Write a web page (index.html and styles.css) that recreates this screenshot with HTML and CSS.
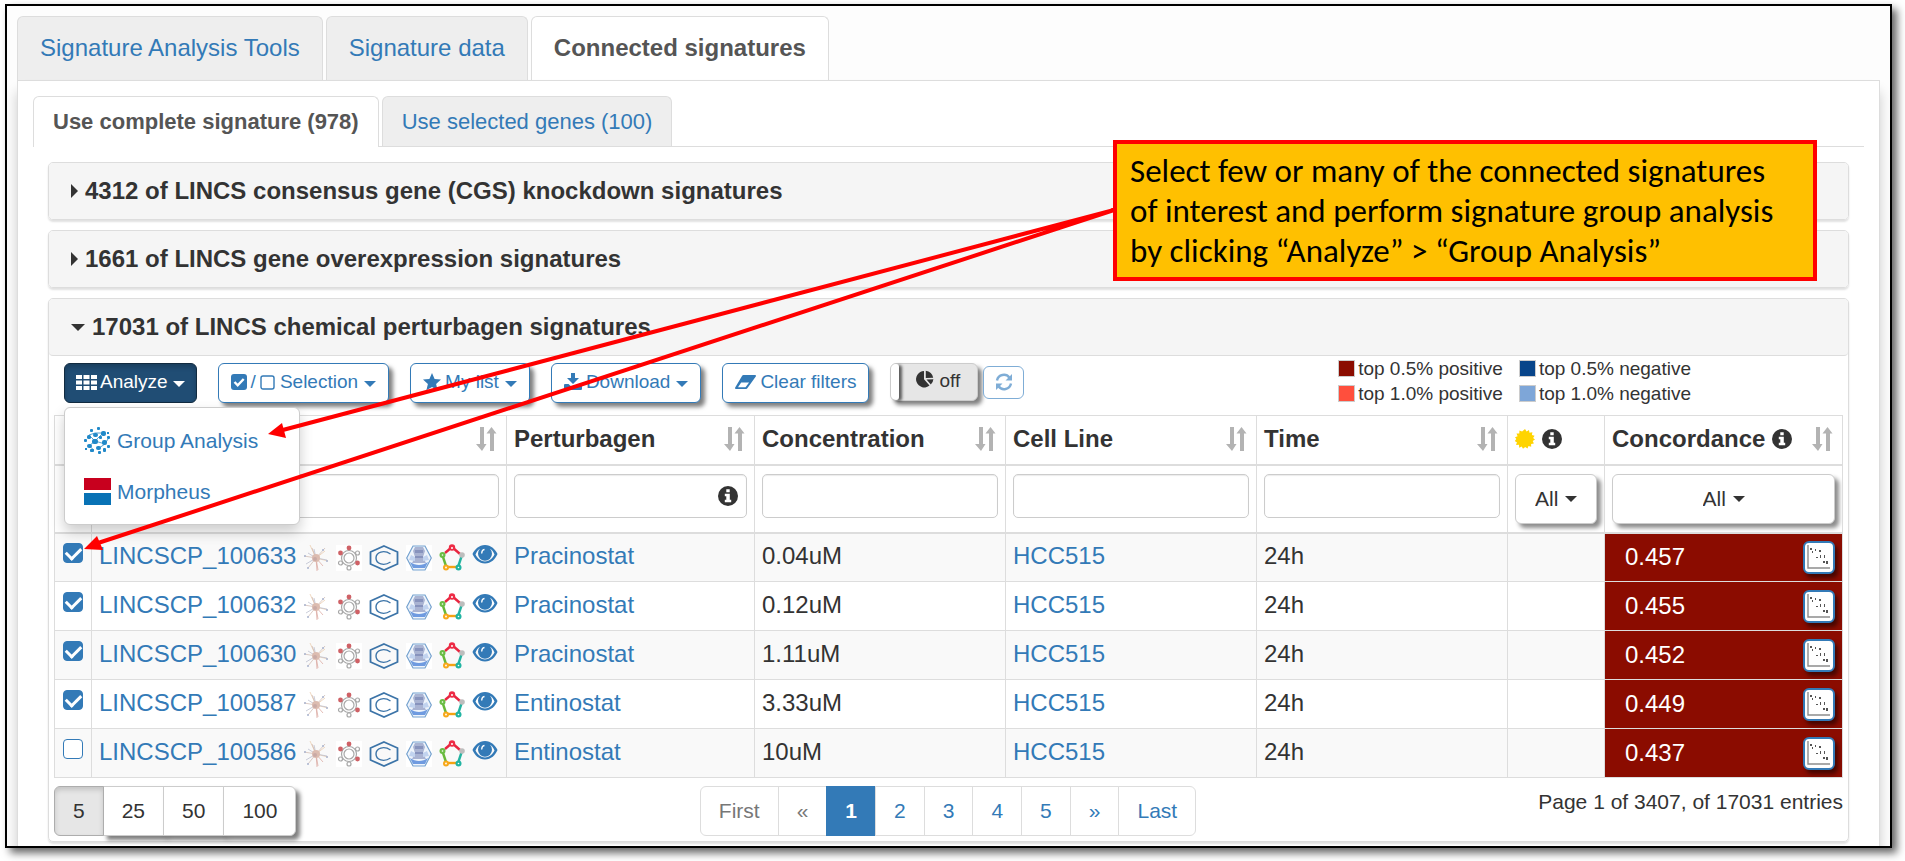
FILE: index.html
```html
<!DOCTYPE html>
<html lang="en">
<head>
  <meta charset="UTF-8">
  <meta name="viewport" content="width=device-width, initial-scale=1.0">
  <title>Connected signatures</title>
  <link rel="stylesheet" href="styles.css">
</head>
<body>
  <!-- icon set -->
  <svg class="defs" aria-hidden="true">
    <symbol id="i-th" viewBox="0 0 21 17"><path d="M0 1h6v4H0zM7.500 1h6v4h-6zM15 1h6v4h-6zM0 6.500h6v4H0zM7.500 6.500h6v4h-6zM15 6.500h6v4h-6zM0 12h6v4H0zM7.500 12h6v4h-6zM15 12h6v4h-6z" fill="currentColor"/></symbol>
    <symbol id="i-check" viewBox="0 0 16 16"><rect width="16" height="16" rx="3" fill="currentColor"/><path d="M3.500 8l3.200 3.300 6-6.300" fill="none" stroke="#fff" stroke-width="2.400"/></symbol>
    <symbol id="i-square" viewBox="0 0 16 16"><rect x="1" y="2" width="13" height="13" rx="2" fill="none" stroke="currentColor" stroke-width="1.400"/></symbol>
    <symbol id="i-star" viewBox="0 0 18 18"><path d="M9 0l2.600 6 6.400.6-4.900 4.300L14.600 17.300 9 14l-5.600 3.300 1.500-6.400L0 6.600 6.400 6z" fill="currentColor"/></symbol>
    <symbol id="i-download" viewBox="0 0 18 18"><path d="M7 0h4v5h4l-6 6-6-6h4z" fill="currentColor"/><path d="M1 11h3.500L9 15l4.500-4H17a1 1 0 0 1 1 1v4a1 1 0 0 1-1 1H1a1 1 0 0 1-1-1v-4a1 1 0 0 1 1-1z" fill="currentColor"/></symbol>
    <symbol id="i-eraser" viewBox="0 0 21 16"><path d="M8.500 1H20a1 1 0 0 1 .8 1.500L12.500 14a2 2 0 0 1-1.500 1H1a1 1 0 0 1-.8-1.500L7 2a2 2 0 0 1 1.500-1zM3 13.200h7.500l3.600-4.800H6.200z" fill="currentColor" fill-rule="evenodd"/></symbol>
    <symbol id="i-pie" viewBox="0 0 18 18"><path d="M8 1v8.300l5.500 6.200A8.200 8.200 0 1 1 8 1zM9.800.8a8 8 0 0 1 7.400 7L9.800 8zM10.500 9.600l6.900-.3a8 8 0 0 1-2.600 5.200z" fill="currentColor"/></symbol>
    <symbol id="i-refresh" viewBox="0 0 18 18"><path d="M2 7.500a7 7 0 0 1 12.500-2.800M16 10.500a7 7 0 0 1-12.500 2.800" fill="none" stroke="currentColor" stroke-width="2.400"/><path d="M17 1v6.500h-6.500zM1 17v-6.500h6.500z" fill="currentColor"/></symbol>
    <symbol id="i-info" viewBox="0 0 20 20"><circle cx="10" cy="10" r="10" fill="currentColor"/><path d="M8.300 3.200h3.400v3H8.300zM6.800 7.800h5v6h1.400v2.500H6.800v-2.500h1.500v-3.500H6.800z" fill="#fff"/></symbol>
    <symbol id="i-sort" viewBox="0 0 22 26"><path d="M5 1h4v17h2.500L7 25 1 18h4zM15 25h4V7.500h2.500L16.500 1 11.500 7.500H15z" fill="#b3b3b3"/></symbol>
    <symbol id="i-sun" viewBox="0 0 20 20"><path d="M10 0l1.600 2.400L14 .9l.5 2.800 2.900-.5-.5 2.900 2.700.7L18.100 9l1.900 1.500-2.300 1.400 1.200 2.700-2.800.3.1 2.900-2.700-.9-1 2.700-2.300-1.700L8 19.800l-1.300-2.400-2.500 1.300-.2-2.900-2.900.2.800-2.800-2.200-1 1.600-2.100L0 8.200l2.600-1L1.500 4.500l2.800-.1.100-2.900 2.700 1.100z" fill="#ffd400"/></symbol>
    <symbol id="i-group" viewBox="0 0 27 27"><g stroke="#2a8cc7" stroke-width=".8" fill="none"><path d="M5 8l6 6 8-8M11 14l-6 5M11 14l10 3M11 6l8 0M5 19l5 4M21 17l-6 4M5 8l6-2M24 12l-3 5"/></g><g fill="#2189c9"><rect x="8" y="12" width="6" height="5" rx="2"/><rect x="17" y="4" width="5" height="5" rx="2"/><rect x="9" y="6" width="5" height="4" rx="2"/><rect x="3" y="8" width="4" height="4" rx="1.500"/><rect x="3" y="17" width="5" height="4" rx="2"/><rect x="18" y="13" width="5" height="5" rx="2"/><rect x="12" y="19" width="5" height="4" rx="2"/><rect x="15" y="9" width="3" height="3" rx="1"/><rect x="23" y="9" width="3" height="3" rx="1"/><rect x="0" y="12" width="3" height="3" rx="1"/><rect x="6" y="2" width="3" height="3" rx="1"/><rect x="13" y="0" width="3" height="3" rx="1"/><rect x="23" y="18" width="3" height="3" rx="1"/><rect x="6" y="22" width="4" height="3" rx="1"/><rect x="14" y="24" width="3" height="3" rx="1"/><rect x="19" y="21" width="3" height="4" rx="1"/><rect x="1" y="21" width="2" height="2"/><rect x="23" y="5" width="2" height="2"/></g></symbol>
    <symbol id="i-morpheus" viewBox="0 0 27 27"><path d="M0 0h27v12H0z" fill="#c8001e"/><path d="M0 15h27v12H0z" fill="#0872b5"/></symbol>
    <symbol id="i-burst" viewBox="0 0 26 28"><g stroke-width=".7" fill="none"><path d="M13 14L7 1M13 14l9-7M13 14l12 3" stroke="#e9c9a8"/><path d="M13 14L1 12M13 14l-8 10M13 14l9-10M13 14L9 4" stroke="#cdb6ae"/><path d="M13 14l1 13M13 14l2 12M13 14l7 8" stroke="#d9a29a"/><path d="M13 14L3 20M13 14l11 2M13 14l-2-9M13 14l-8-5" stroke="#b5b8c8"/></g><circle cx="13" cy="14" r="4" fill="#dcbcb0"/><circle cx="12" cy="15" r="2" fill="#c9aaa6"/><g fill="#aab4cf"><circle cx="2" cy="12" r="1"/><circle cx="20" cy="6" r="1"/><circle cx="5" cy="24" r="1"/><circle cx="24" cy="17" r="1"/></g></symbol>
    <symbol id="i-ring" viewBox="0 0 26 26"><path d="M0 0h26v26H0z" fill="#fff"/><g fill="#fff" stroke="#a8a8a8" stroke-width="1.200"><circle cx="13" cy="13" r="7.500"/><circle cx="13" cy="13" r="5"/><circle cx="21.500" cy="8" r="2"/><circle cx="4.500" cy="18" r="2"/><circle cx="13" cy="23" r="2"/></g><g fill="#cf6166"><circle cx="13" cy="3" r="2.400"/><circle cx="4.500" cy="8" r="2.400"/><circle cx="21.500" cy="18" r="2.400"/></g></symbol>
    <symbol id="i-chex" viewBox="0 0 30 26"><g fill="none" stroke="#3c74a8"><path d="M15 1l13.500 6v12L15 25 1.500 19V7z" stroke-width="1.800"/><path d="M21.500 9C15 4.500 7 7 7 13s8 8.500 14.500 4" stroke-width="1.400"/></g></symbol>
    <symbol id="i-photo" viewBox="0 0 26 26"><path d="M0 0h26v26H0z" fill="#fff"/><path d="M7 1h12l6.300 12L19 25H7L.7 13z" fill="#eef4fb" stroke="#75a2cf" stroke-width="1.200"/><path d="M9 2h8l2 4-2 6 3 6H6l3-6-2-6z" fill="#a9b3d2"/><path d="M9 5h8v3H9zM9 11h8v2H9z" fill="#8793bd"/><path d="M4 17c6 4 12 4 18 0l-3 6H7z" fill="#6f9be0"/><path d="M5 10l4 2v4l-6-1zM21 10l-4 2v4l6-1z" fill="#c1d3ef"/></symbol>
    <symbol id="i-penta" viewBox="0 0 26 27"><g fill="none" stroke-width="2.400"><path d="M13 3L6 9" stroke="#e8253f"/><path d="M13 3l8 7" stroke="#e8253f"/><path d="M3 10l4 12" stroke="#67b83a"/><path d="M7 23h12" stroke="#f5a312"/><path d="M19 23l4-12" stroke="#23b3a0"/></g><circle cx="13" cy="3.500" r="3.200" fill="#ee2b45"/><circle cx="3.500" cy="11" r="3" fill="#6abd45"/><circle cx="23" cy="11" r="2.800" fill="#bdbdbd"/><circle cx="7" cy="23.500" r="3" fill="#f7a81b"/><circle cx="19.500" cy="23.500" r="3" fill="#21b4a2"/><g fill="#fff"><circle cx="13" cy="4" r="1"/><circle cx="3.500" cy="11" r=".8"/><circle cx="7" cy="23.500" r=".9"/><circle cx="19.500" cy="23.500" r=".8"/></g></symbol>
    <symbol id="i-eye" viewBox="0 0 26 22"><path d="M13 1C7 1 2.500 5.500.5 10c2 5 6.500 9.500 12.500 9.500S23.500 15 25.500 10C23.500 5.500 19 1 13 1zm0 16.500c-4 0-7.500-3-9.500-7C4.500 8 6 6 8 4.800a7 7 0 1 0 10 0c2 1.200 3.500 3.200 4.500 5.700-2 4-5.500 7-9.500 7z" fill="currentColor" fill-rule="evenodd"/><circle cx="13" cy="9.500" r="5.200" fill="currentColor"/><path d="M12.500 5.500c-2 .3-3 2-2.600 4" fill="none" stroke="#fff" stroke-width="1.400"/></symbol>
    <symbol id="i-plot" viewBox="0 0 26 28"><path d="M2 2v23h22" fill="none" stroke="#8d8d8d" stroke-width="1.400"/><path d="M4 5h2v2H4zM6 8h1v2H6zM9 6h1v2H9zM13 7h2v2h-2zM10 14h2v1h-2zM14 12h1v3h-1zM18 12h1v3h-1zM17 18h2v2h-2zM20 18h2v3h-2z" fill="#555"/></symbol>
  </svg>

  <div class="frame">
    <nav class="tabs">
      <a href="#tools">Signature Analysis Tools</a>
      <a href="#data">Signature data</a>
      <a href="#connected" class="active">Connected signatures</a>
    </nav>

    <main class="content">
      <nav class="tabs tabs-sm">
        <a href="#complete" class="active">Use complete signature (978)</a>
        <a href="#selected">Use selected genes (100)</a>
      </nav>

      <div class="panels">
        <section class="panel">
          <h4><i class="caret-right"></i>4312 of LINCS consensus gene (CGS) knockdown signatures</h4>
        </section>
        <section class="panel">
          <h4><i class="caret-right"></i>1661 of LINCS gene overexpression signatures</h4>
        </section>
        <section class="panel open">
          <h4><i class="caret"></i>17031 of LINCS chemical perturbagen signatures</h4>

          <div class="panel-body">
            <div class="toolbar">
              <div class="dropdown">
                <button type="button" class="btn btn-dark"><svg width="21" height="17"><use href="#i-th"/></svg>Analyze<i class="caret"></i></button>
                <div class="menu">
                  <a href="#group"><svg width="27" height="27"><use href="#i-group"/></svg>Group Analysis</a>
                  <a href="#morpheus"><svg width="27" height="27"><use href="#i-morpheus"/></svg>Morpheus</a>
                </div>
              </div>
              <button type="button" class="btn"><svg width="16" height="16"><use href="#i-check"/></svg>/<svg width="16" height="16"><use href="#i-square"/></svg>Selection<i class="caret"></i></button>
              <button type="button" class="btn"><svg width="18" height="18"><use href="#i-star"/></svg>My list<i class="caret"></i></button>
              <button type="button" class="btn"><svg width="18" height="18"><use href="#i-download"/></svg>Download<i class="caret"></i></button>
              <button type="button" class="btn"><svg width="21" height="16"><use href="#i-eraser"/></svg>Clear filters</button>
              <div class="switches">
                <label class="toggle"><input type="checkbox"><svg width="18" height="18"><use href="#i-pie"/></svg>off</label>
                <button type="button" class="btn-refresh" aria-label="Refresh"><svg width="18" height="18"><use href="#i-refresh"/></svg></button>
              </div>
              <ul class="legend">
                <li><i class="sw pos-05"></i>top 0.5% positive</li>
                <li><i class="sw neg-05"></i>top 0.5% negative</li>
                <li><i class="sw pos-10"></i>top 1.0% positive</li>
                <li><i class="sw neg-10"></i>top 1.0% negative</li>
              </ul>
            </div>

            <table>
              <colgroup>
                <col class="c-check"><col class="c-id"><col class="c-name"><col><col><col><col class="c-sun"><col class="c-conc">
              </colgroup>
              <thead>
                <tr>
                  <th></th>
                  <th><div class="th"><svg class="sort" width="22" height="26"><use href="#i-sort"/></svg></div></th>
                  <th><div class="th">Perturbagen<svg class="sort" width="22" height="26"><use href="#i-sort"/></svg></div></th>
                  <th><div class="th">Concentration<svg class="sort" width="22" height="26"><use href="#i-sort"/></svg></div></th>
                  <th><div class="th">Cell Line<svg class="sort" width="22" height="26"><use href="#i-sort"/></svg></div></th>
                  <th><div class="th">Time<svg class="sort" width="22" height="26"><use href="#i-sort"/></svg></div></th>
                  <th><div class="th"><svg width="20" height="20"><use href="#i-sun"/></svg><svg width="20" height="20"><use href="#i-info"/></svg></div></th>
                  <th><div class="th">Concordance<svg width="20" height="20"><use href="#i-info"/></svg><svg class="sort" width="22" height="26"><use href="#i-sort"/></svg></div></th>
                </tr>
                <tr class="filters">
                  <td></td>
                  <td><input type="text" class="field" aria-label="Signature"></td>
                  <td><div class="field field-info"><input type="text" aria-label="Perturbagen"><svg width="20" height="20"><use href="#i-info"/></svg></div></td>
                  <td><input type="text" class="field" aria-label="Concentration"></td>
                  <td><input type="text" class="field" aria-label="Cell Line"></td>
                  <td><input type="text" class="field" aria-label="Time"></td>
                  <td><label class="pick"><select aria-label="Active"><option>All</option></select><i class="caret"></i></label></td>
                  <td><label class="pick"><select aria-label="Concordance"><option>All</option></select><i class="caret"></i></label></td>
                </tr>
              </thead>
              <tbody>
                <tr>
                  <td><input type="checkbox" class="check" aria-label="LINCSCP_100633" checked></td>
                  <td><div class="sig"><a href="#LINCSCP_100633">LINCSCP_100633</a><svg width="26" height="28"><use href="#i-burst"/></svg><svg width="26" height="26"><use href="#i-ring"/></svg><svg width="30" height="26"><use href="#i-chex"/></svg><svg width="26" height="26"><use href="#i-photo"/></svg><svg width="26" height="27"><use href="#i-penta"/></svg><svg class="eye" width="26" height="22"><use href="#i-eye"/></svg></div></td>
                  <td><a href="#Pracinostat">Pracinostat</a></td>
                  <td>0.04uM</td>
                  <td><a href="#HCC515">HCC515</a></td>
                  <td>24h</td>
                  <td></td>
                  <td class="score"><div>0.457<button type="button" aria-label="Plot"><svg width="26" height="28"><use href="#i-plot"/></svg></button></div></td>
                </tr>
                <tr>
                  <td><input type="checkbox" class="check" aria-label="LINCSCP_100632" checked></td>
                  <td><div class="sig"><a href="#LINCSCP_100632">LINCSCP_100632</a><svg width="26" height="28"><use href="#i-burst"/></svg><svg width="26" height="26"><use href="#i-ring"/></svg><svg width="30" height="26"><use href="#i-chex"/></svg><svg width="26" height="26"><use href="#i-photo"/></svg><svg width="26" height="27"><use href="#i-penta"/></svg><svg class="eye" width="26" height="22"><use href="#i-eye"/></svg></div></td>
                  <td><a href="#Pracinostat">Pracinostat</a></td>
                  <td>0.12uM</td>
                  <td><a href="#HCC515">HCC515</a></td>
                  <td>24h</td>
                  <td></td>
                  <td class="score"><div>0.455<button type="button" aria-label="Plot"><svg width="26" height="28"><use href="#i-plot"/></svg></button></div></td>
                </tr>
                <tr>
                  <td><input type="checkbox" class="check" aria-label="LINCSCP_100630" checked></td>
                  <td><div class="sig"><a href="#LINCSCP_100630">LINCSCP_100630</a><svg width="26" height="28"><use href="#i-burst"/></svg><svg width="26" height="26"><use href="#i-ring"/></svg><svg width="30" height="26"><use href="#i-chex"/></svg><svg width="26" height="26"><use href="#i-photo"/></svg><svg width="26" height="27"><use href="#i-penta"/></svg><svg class="eye" width="26" height="22"><use href="#i-eye"/></svg></div></td>
                  <td><a href="#Pracinostat">Pracinostat</a></td>
                  <td>1.11uM</td>
                  <td><a href="#HCC515">HCC515</a></td>
                  <td>24h</td>
                  <td></td>
                  <td class="score"><div>0.452<button type="button" aria-label="Plot"><svg width="26" height="28"><use href="#i-plot"/></svg></button></div></td>
                </tr>
                <tr>
                  <td><input type="checkbox" class="check" aria-label="LINCSCP_100587" checked></td>
                  <td><div class="sig"><a href="#LINCSCP_100587">LINCSCP_100587</a><svg width="26" height="28"><use href="#i-burst"/></svg><svg width="26" height="26"><use href="#i-ring"/></svg><svg width="30" height="26"><use href="#i-chex"/></svg><svg width="26" height="26"><use href="#i-photo"/></svg><svg width="26" height="27"><use href="#i-penta"/></svg><svg class="eye" width="26" height="22"><use href="#i-eye"/></svg></div></td>
                  <td><a href="#Entinostat">Entinostat</a></td>
                  <td>3.33uM</td>
                  <td><a href="#HCC515">HCC515</a></td>
                  <td>24h</td>
                  <td></td>
                  <td class="score"><div>0.449<button type="button" aria-label="Plot"><svg width="26" height="28"><use href="#i-plot"/></svg></button></div></td>
                </tr>
                <tr>
                  <td><input type="checkbox" class="check" aria-label="LINCSCP_100586"></td>
                  <td><div class="sig"><a href="#LINCSCP_100586">LINCSCP_100586</a><svg width="26" height="28"><use href="#i-burst"/></svg><svg width="26" height="26"><use href="#i-ring"/></svg><svg width="30" height="26"><use href="#i-chex"/></svg><svg width="26" height="26"><use href="#i-photo"/></svg><svg width="26" height="27"><use href="#i-penta"/></svg><svg class="eye" width="26" height="22"><use href="#i-eye"/></svg></div></td>
                  <td><a href="#Entinostat">Entinostat</a></td>
                  <td>10uM</td>
                  <td><a href="#HCC515">HCC515</a></td>
                  <td>24h</td>
                  <td></td>
                  <td class="score"><div>0.437<button type="button" aria-label="Plot"><svg width="26" height="28"><use href="#i-plot"/></svg></button></div></td>
                </tr>
              </tbody>
            </table>

            <div class="footer">
              <div class="sizes">
                <button type="button" class="active">5</button>
                <button type="button">25</button>
                <button type="button">50</button>
                <button type="button">100</button>
              </div>
              <nav class="pages">
                <a href="#first" class="off">First</a>
                <a href="#prev" class="off">«</a>
                <a href="#p1" class="active">1</a>
                <a href="#p2">2</a>
                <a href="#p3">3</a>
                <a href="#p4">4</a>
                <a href="#p5">5</a>
                <a href="#next">»</a>
                <a href="#last">Last</a>
              </nav>
              <p>Page 1 of 3407, of 17031 entries</p>
            </div>
          </div>
        </section>
      </div>
    </main>

    <!-- help note with arrows to the menu and the first tick box -->
    <svg class="arrows" aria-hidden="true">
      <g stroke="#f00" stroke-width="4"><path d="M1107 204L272 425M1107 204L88 538"/></g>
      <g fill="#f00"><path d="M261 428l14-11 4 15zM77 543l13-13 6 14z"/></g>
    </svg>
    <div class="callout">Select few or many of the connected signatures<br>of interest and perform signature group analysis<br>by clicking “Analyze” &gt; “Group Analysis”</div>
  </div>
</body>
</html>
```

FILE: styles.css
```css
* {
  box-sizing: border-box;
}

body {
  margin: 0;
  background: #fff;
  font-family: "Liberation Sans", Arial, sans-serif;
  font-size: 24px;
  line-height: 32px;
  color: #333;
}

a {
  color: #337ab7;
  text-decoration: none;
}

button, input, select {
  font-family: inherit;
  color: inherit;
}

svg {
  display: block;
  flex: none;
}

.defs {
  position: absolute;
  width: 0;
  height: 0;
}

.frame {
  position: relative;
  margin: 4px 13px 13px 5px;
  padding: 10px 10px 0 10px;
  border: 2px solid #000;
  background: #fdfdfd;
  box-shadow: 5px 5px 8px rgba(0,0,0,0.6);
}

/* tabs */
.tabs {
  display: flex;
  gap: 3px;
}

.tabs a {
  padding: 15px 22px 16px;
  border: 1px solid #ddd;
  border-bottom: none;
  border-radius: 6px 6px 0 0;
  background: #eee;
}

.tabs a.active {
  position: relative;
  margin-bottom: -1px;
  background: #fff;
  color: #555;
  font-weight: bold;
}

.content {
  padding: 15px 15px 4px;
  border: 1px solid #ddd;
  border-bottom: none;
  background: #fff;
  box-shadow: 0 12px 12px rgba(0,0,0,0.2);
  clip-path: inset(-1px -10px 0 -10px);
}

.tabs-sm {
  border-bottom: 1px solid #ddd;
  font-size: 22px;
  line-height: 24px;
}

.tabs-sm a {
  padding: 13px 19px 12px;
}

/* panels */
.panels {
  display: flex;
  flex-direction: column;
  gap: 10px;
  padding: 15px 15px 0;
}

.panel {
  border: 1px solid #ddd;
  border-radius: 5px;
  box-shadow: 0 2px 2px rgba(0,0,0,0.12);
}

.panel h4 {
  display: flex;
  align-items: center;
  gap: 7px;
  margin: 0;
  padding: 12px 22px;
  border-radius: 4px;
  background: #f5f5f5;
  font-size: 24px;
}

.panel.open h4 {
  border-bottom: 1px solid #ddd;
}

.caret {
  flex: none;
  border: 6px solid transparent;
  border-top-color: currentColor;
  border-bottom: none;
}

h4 .caret {
  border-width: 7px;
  border-bottom: none;
}

.caret-right {
  border: 7px solid transparent;
  border-left-color: currentColor;
  border-right: none;
}

.panel-body {
  padding: 7px 5px 5px;
}

/* toolbar */
.toolbar {
  display: flex;
  align-items: flex-start;
  gap: 21px;
  padding: 0 10px;
  margin-bottom: 12px;
  font-size: 19px;
  line-height: 20px;
}

.btn {
  display: flex;
  align-items: center;
  gap: 4px;
  height: 40px;
  padding: 0 12px 2px;
  border: 1px solid #337ab7;
  border-radius: 6px;
  background: #fff;
  color: #337ab7;
  font-size: 19px;
  box-shadow: 4px 4px 4px rgba(0,0,0,0.5);
}

.btn .caret {
  margin: 4px 0 0 2px;
}

.btn-dark {
  padding: 0 11px 2px;
  gap: 3px;
  border-color: #122b40;
  background: #204d74;
  color: #fff;
  box-shadow: inset 0 3px 5px rgba(0,0,0,0.2);
}

.dropdown {
  position: relative;
}

.menu {
  position: absolute;
  top: 44px;
  left: 0;
  z-index: 2;
  width: 236px;
  padding: 7px 0;
  border: 1px solid #ccc;
  border-radius: 6px;
  background: #fff;
  box-shadow: 0 7px 14px rgba(0,0,0,0.2);
  font-size: 21px;
}

.menu a {
  display: flex;
  align-items: center;
  gap: 6px;
  height: 51px;
  padding: 0 19px;
}

.switches {
  display: flex;
  align-items: center;
  gap: 5px;
}

.toggle {
  display: flex;
  gap: 5px;
  height: 38px;
  padding-right: 17px;
  border: 1px solid #ccc;
  border-radius: 6px;
  background: #e6e6e6;
  box-shadow: 4px 4px 4px rgba(0,0,0,0.5);
  line-height: 34px;
}

.toggle input {
  appearance: none;
  width: 8px;
  height: 36px;
  margin: 0 12px 0 0;
  border-radius: 5px 3px 3px 5px;
  background: #fff;
  box-shadow: 3px 1px 3px rgba(0,0,0,0.6);
}

.toggle svg {
  margin-top: 6px;
}

.btn-refresh {
  display: grid;
  place-items: center;
  width: 41px;
  height: 33px;
  padding: 0;
  border: 1px solid #7fadd6;
  border-radius: 6px;
  background: #fff;
  color: #7fadd6;
}

.legend {
  display: grid;
  grid-template-columns: auto auto;
  column-gap: 16px;
  margin: -7px 142px -7px auto;
  padding: 0;
  list-style: none;
  line-height: 25px;
}

.legend li {
  display: flex;
  align-items: center;
  gap: 3px;
}

.sw {
  width: 17px;
  height: 17px;
  border: 1px solid #ccc;
}

.pos-05 { background: #8b0c00; }
.pos-10 { background: #ff4f3d; }
.neg-05 { background: #08458a; }
.neg-10 { background: #7ea6d8; }

/* table */
table {
  width: 100%;
  border-collapse: collapse;
  table-layout: fixed;
}

.c-check { width: 37px; }
.c-id { width: 415px; }
.c-name { width: 248px; }
.c-sun { width: 97px; }
.c-conc { width: 238px; }

th, td {
  height: 49px;
  padding: 0 7px;
  border: 1px solid #ddd;
  text-align: left;
}

th {
  padding-bottom: 2px;
}

thead th, thead td {
  border-bottom-width: 2px;
}

thead td {
  height: 68px;
  padding-top: 8px;
  vertical-align: top;
}

tbody td {
  padding-bottom: 2px;
}

tbody tr:nth-child(odd) {
  background: #f9f9f9;
}

.th {
  display: flex;
  align-items: center;
  gap: 7px;
}

.sort {
  margin: 0 2px 0 auto;
}

.field {
  display: block;
  width: 100%;
  height: 44px;
  padding: 0 8px;
  border: 1px solid #ccc;
  border-radius: 5px;
  background: #fff;
  box-shadow: inset 0 1px 1px rgba(0,0,0,0.08);
  font-size: 21px;
}

.field-info {
  display: flex;
  align-items: center;
}

.field-info input {
  flex: 1;
  min-width: 0;
  padding: 0;
  border: none;
  background: none;
}

.pick {
  display: flex;
  align-items: center;
  justify-content: center;
  gap: 6px;
  height: 50px;
  border: 1px solid #ccc;
  border-radius: 6px;
  background: #fff;
  box-shadow: 4px 4px 4px rgba(0,0,0,0.45);
}

.pick select {
  appearance: none;
  padding: 0;
  border: none;
  background: none;
  font-size: 21px;
}

.check {
  display: grid;
  place-items: center;
  appearance: none;
  width: 20px;
  height: 20px;
  margin: 0 0 6px 1px;
  border: 1px solid #337ab7;
  border-radius: 4px;
  background: #fff;
}

.check:checked {
  background: #337ab7;
}

.check:checked::after {
  content: "";
  width: 12px;
  height: 7px;
  margin-bottom: 3px;
  border: solid #fff;
  border-width: 0 0 3px 3px;
  rotate: -45deg;
}

.sig {
  display: flex;
  align-items: center;
  gap: 7px;
  color: #337ab7;
}

.sig svg {
  margin-top: 3px;
}

.sig .eye {
  margin: 0 0 3px;
}

td.score {
  padding: 0 7px 0 20px;
  border-left-color: #8b0c00;
  background: #8b0c00;
  color: #fff;
}

.score div {
  display: flex;
  align-items: center;
  justify-content: space-between;
}

.score button {
  display: grid;
  place-items: center;
  width: 32px;
  height: 33px;
  padding: 0;
  border: 2px solid #337ab7;
  border-radius: 6px;
  background: #fff;
  box-shadow: 3px 4px 4px rgba(0,0,0,0.5);
}

/* footer */
.footer {
  display: grid;
  grid-template-columns: 1fr auto 1fr;
  margin-top: 8px;
  font-size: 21px;
}

.footer p {
  margin: 0;
  text-align: right;
}

.sizes, .pages {
  display: flex;
}

.sizes button {
  height: 50px;
  margin-right: -1px;
  padding: 0 18px;
  border: 1px solid #ccc;
  background: #fff;
  font-size: 21px;
  box-shadow: 4px 4px 4px rgba(0,0,0,0.5);
}

.sizes .active {
  z-index: 1;
  border-color: #adadad;
  background: #e6e6e6;
  box-shadow: inset 0 3px 5px rgba(0,0,0,0.15);
}

.pages a {
  margin-left: -1px;
  padding: 8px 18px;
  border: 1px solid #ddd;
  background: #fff;
}

.sizes :first-child, .pages :first-child {
  border-radius: 6px 0 0 6px;
}

.sizes :last-child, .pages :last-child {
  border-radius: 0 6px 6px 0;
}

.pages .off {
  color: #777;
}

.pages .active {
  border-color: #337ab7;
  background: #337ab7;
  color: #fff;
  font-weight: bold;
}

/* help note */
.arrows {
  position: absolute;
  top: 0;
  left: 0;
  z-index: 3;
  width: 100%;
  height: 100%;
  pointer-events: none;
}

.callout {
  position: absolute;
  top: 134px;
  left: 1106px;
  z-index: 4;
  width: 704px;
  padding: 7px 13px 6px;
  border: 4px solid #f00;
  background: #ffc000;
  color: #000;
  font-family: Carlito, Lato, sans-serif;
  font-size: 33px;
  line-height: 40px;
}
```
